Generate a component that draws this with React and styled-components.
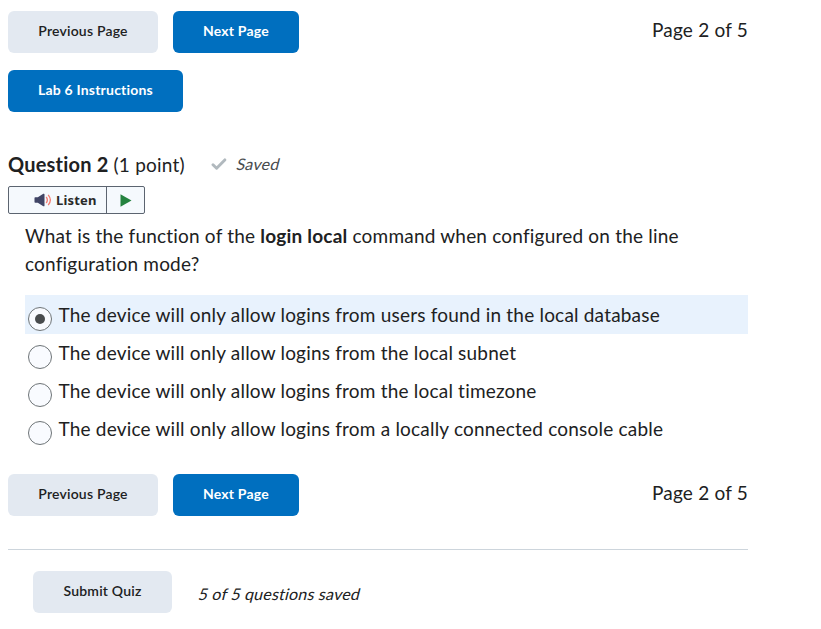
import React from 'react';
import styled, { createGlobalStyle } from 'styled-components';

const Global = createGlobalStyle`
  * { box-sizing: border-box; }
  body { margin: 0; background: #fff; color: #202122; font: 400 19px/28px Lato, sans-serif; letter-spacing: 0.2px; }
`;

const Page = styled.main`
  width: 748px;
  padding: 11px 0 0 8px;
`;

const Pager = styled.nav`
  display: flex;
  gap: 15px;
  height: 42px;
`;

const Button = styled.button`
  width: ${(p) => p.$width}px;
  height: 42px;
  flex: none;
  padding: 0 0 2px;
  border: 0;
  border-radius: 6px;
  background: ${(p) => (p.$primary ? '#006fbf' : '#e3e9f1')};
  color: ${(p) => (p.$primary ? '#fff' : '#202122')};
  font: ${(p) => (p.$primary ? 700 : 600)} 14px/20px Lato, sans-serif;
  letter-spacing: 0.2px;
`;

const PageCount = styled.span`
  margin-left: auto;
  padding-top: 5px;
`;

const Instructions = styled.div`
  margin-top: 17px;
  height: 42px;
`;

const Heading = styled.header`
  display: flex;
  align-items: center;
  height: 28px;
  margin-top: 39px;
`;

const Title = styled.h2`
  margin: 0;
  font: 400 19px/28px Lato, sans-serif;
  letter-spacing: 0.2px;
  width: 203px;
  b { font-size: 20px; line-height: 1; }
`;

const Saved = styled.em`
  display: flex;
  align-items: center;
  gap: 10px;
  padding-bottom: 2px;
  color: #494c4e;
`;

/* Upright letterforms slanted, rather than the narrower italic face. */
const Slanted = styled.span`
  display: inline-block;
  font-size: 16px;
  font-style: normal;
  transform: skewX(-14deg);
`;

const Listen = styled.div`
  display: flex;
  width: 137px;
  height: 28px;
  margin-top: 7px;
  border: 1px solid #5c6470;
  border-radius: 2px;
  background: #f5f9fd;
`;

const ListenButton = styled.button`
  display: flex;
  align-items: center;
  gap: 4px;
  width: 98px;
  padding: 0 0 0 25px;
  border: 0;
  border-right: 1px solid #5c6470;
  background: none;
  color: #292929;
  font: 700 13px/20px 'Noto Sans', sans-serif;
  letter-spacing: 0.2px;
`;

const PlayButton = styled.button`
  flex: 1;
  display: flex;
  align-items: center;
  justify-content: center;
  padding: 0;
  border: 0;
  background: none;
`;

const Prompt = styled.p`
  margin: 8px 0 0 17px;
`;

const Options = styled.div`
  margin: 17px 0 0 17px;
`;

const Option = styled.label`
  display: flex;
  align-items: flex-start;
  gap: 6.5px;
  height: ${(p) => (p.$selected ? 39 : 38)}px;
  padding-left: 3px;
  background: ${(p) => (p.$selected ? '#e8f2fd' : 'transparent')};
`;

const Radio = styled.span`
  display: flex;
  align-items: center;
  justify-content: center;
  width: 24px;
  height: 24px;
  margin-top: ${(p) => (p.$selected ? 12 : 11)}px;
  border: 1px solid #6e7477;
  border-radius: 50%;
  background: #f9fbff;
`;

const Dot = styled.span`
  width: 10px;
  height: 10px;
  border-radius: 50%;
  background: #494c4e;
`;

const OptionText = styled.span`
  margin-top: ${(p) => (p.$selected ? 6 : 5)}px;
`;

const BottomPager = styled(Pager)`
  margin-top: 26px;
`;

const Footer = styled.footer`
  display: flex;
  gap: 27px;
  margin-top: 33px;
  padding: 21px 0 0 25px;
  border-top: 1px solid #cdd5dc;
`;

const Progress = styled.em`
  padding-top: 8px;
`;

const answers = [
  'The device will only allow logins from users found in the local database',
  'The device will only allow logins from the local subnet',
  'The device will only allow logins from the local timezone',
  'The device will only allow logins from a locally connected console cable',
];

const PagerItems = () => (
  <>
    <Button $width={150}>Previous Page</Button>
    <Button $width={126} $primary>Next Page</Button>
    <PageCount>Page 2 of 5</PageCount>
  </>
);

export default function App() {
  return (
    <Page>
      <Global />
      <Pager><PagerItems /></Pager>
      <Instructions><Button $width={175} $primary>Lab 6 Instructions</Button></Instructions>
      <Heading>
        <Title><b>Question 2</b> (1 point)</Title>
        <Saved>
          <svg width="16" height="14" viewBox="0 0 16 14" fill="none" stroke="#b1b9be" strokeWidth="2.9" strokeLinecap="round" strokeLinejoin="round">
            <path d="M2 7.7 5.6 11.3 13.8 2.9" />
          </svg>
          <Slanted>Saved</Slanted>
        </Saved>
      </Heading>
      <Listen>
        <ListenButton>
          <svg width="18" height="14" viewBox="0 0 18 14" fill="none">
            <path d="M.5 5q0-.7.7-.7H3.8L9.3.8Q10.5.3 10.5 1.5v11q0 1.2-1.2.7L3.8 9.7H1.2Q.5 9.7.5 9z" fill="#414566" />
            <path d="M12.2 4q2.3 3 0 6M14.2 1.8q4.3 5.2 0 10.4" stroke="#f47b70" strokeWidth="1.3" />
          </svg>
          Listen
        </ListenButton>
        <PlayButton aria-label="Play">
          <svg width="12" height="13" viewBox="0 0 12 13"><path d="M.5.3 11.5 6.5.5 12.7z" fill="#24823f" /></svg>
        </PlayButton>
      </Listen>
      <Prompt>
        What is the function of the <b>login local</b> command when configured on the line configuration mode?
      </Prompt>
      <Options>
        {answers.map((text, i) => (
          <Option key={text} $selected={i === 0}>
            <Radio $selected={i === 0}>{i === 0 && <Dot />}</Radio>
            <OptionText $selected={i === 0}>{text}</OptionText>
          </Option>
        ))}
      </Options>
      <BottomPager><PagerItems /></BottomPager>
      <Footer>
        <Button $width={139}>Submit Quiz</Button>
        <Progress><Slanted>5 of 5 questions saved</Slanted></Progress>
      </Footer>
    </Page>
  );
}
